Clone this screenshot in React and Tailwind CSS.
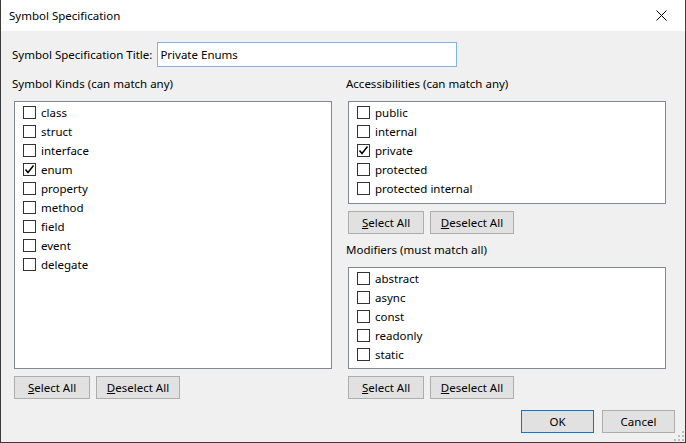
import React from 'react';

const font = { fontFamily: '"Segoe UI", "Noto Sans", sans-serif' };

function CheckBox({ checked }) {
  return (
    <span className="w-[13px] h-[13px] border border-[#333333] bg-white flex items-center justify-center shrink-0">
      {checked && (
        <svg width="11" height="11" viewBox="0 0 11 11">
          <path d="M1.5 5.5 L4 8.5 L9.5 1.5" fill="none" stroke="#000" strokeWidth="1.5" />
        </svg>
      )}
    </span>
  );
}

function CheckList({ items, checked = [], height }) {
  return (
    <div className={`bg-white border border-[#828790] pt-[1px] pl-[8px] ${height}`}>
      {items.map((item) => (
        <div key={item} className="h-[19px] flex items-center gap-[5px]">
          <CheckBox checked={checked.includes(item)} />
          <span className="leading-none">{item}</span>
        </div>
      ))}
    </div>
  );
}

function Button({ children, width, primary }) {
  return (
    <button
      className={`h-[23px] bg-[#e1e1e1] border ${
        primary ? 'border-[#0078d7]' : 'border-[#adadad]'
      } ${width} flex items-center justify-center text-[11.5px] text-black`}
    >
      {children}
    </button>
  );
}

function SelectButtons() {
  return (
    <div className="flex gap-[6px]">
      <Button width="w-[76px]">
        <span><u>S</u>elect All</span>
      </Button>
      <Button width="w-[84px]">
        <span><u>D</u>eselect All</span>
      </Button>
    </div>
  );
}

export default function App() {
  return (
    <div
      className="w-[686px] h-[443px] flex flex-col border-x border-b border-[#3a3a3a] text-[11.5px] text-black overflow-hidden"
      style={font}
    >
      {/* Barre de titre */}
      <div className="h-[31px] bg-white flex items-center justify-between pl-[8px] pr-[18px] shrink-0">
        <span>Symbol Specification</span>
        <svg width="11" height="11" viewBox="0 0 11 11">
          <path d="M0.5 0.5 L10.5 10.5 M10.5 0.5 L0.5 10.5" stroke="#000" strokeWidth="1" />
        </svg>
      </div>

      {/* Contenu */}
      <div className="flex-1 bg-[#f0f0f0] flex flex-col pl-[13px] pr-[19px] relative">
        <div className="flex items-center mt-[11px] h-[25px]">
          <span className="-ml-[2px] mr-[5px]">Symbol Specification Title:</span>
          <div className="w-[300px] h-[25px] bg-white border border-[#7eb4ea] flex items-center px-[2px]">
            Private Enums
          </div>
        </div>

        <div className="flex gap-[16px] mt-[9px]">
          {/* Colonne gauche */}
          <div className="w-[318px] flex flex-col">
            <div className="h-[16px] flex items-center -ml-[2px]">Symbol Kinds (can match any)</div>
            <div className="mt-[9px]">
              <CheckList
                height="h-[268px]"
                items={['class', 'struct', 'interface', 'enum', 'property', 'method', 'field', 'event', 'delegate']}
                checked={['enum']}
              />
            </div>
            <div className="mt-[7px]">
              <SelectButtons />
            </div>
          </div>

          {/* Colonne droite */}
          <div className="w-[318px] flex flex-col">
            <div className="h-[16px] flex items-center -ml-[2px]">Accessibilities (can match any)</div>
            <div className="mt-[9px]">
              <CheckList
                height="h-[103px]"
                items={['public', 'internal', 'private', 'protected', 'protected internal']}
                checked={['private']}
              />
            </div>
            <div className="mt-[7px]">
              <SelectButtons />
            </div>
            <div className="h-[16px] flex items-center -ml-[2px] mt-[8px]">Modifiers (must match all)</div>
            <div className="mt-[9px]">
              <CheckList
                height="h-[102px]"
                items={['abstract', 'async', 'const', 'readonly', 'static']}
              />
            </div>
            <div className="mt-[7px]">
              <SelectButtons />
            </div>
          </div>
        </div>

        <div className="flex justify-end gap-[8px] mt-[11px] -mr-[9px]">
          <Button width="w-[73px]" primary>OK</Button>
          <Button width="w-[73px]">Cancel</Button>
        </div>

        {/* Poignée de redimensionnement */}
        <svg className="absolute right-[1px] bottom-[1px]" width="11" height="11" viewBox="0 0 11 11">
          {[[9, 1], [9, 5], [5, 5], [9, 9], [5, 9], [1, 9]].map(([x, y]) => (
            <rect key={`${x}-${y}`} x={x} y={y} width="2" height="2" fill="#bcbcbc" />
          ))}
        </svg>
      </div>
    </div>
  );
}
